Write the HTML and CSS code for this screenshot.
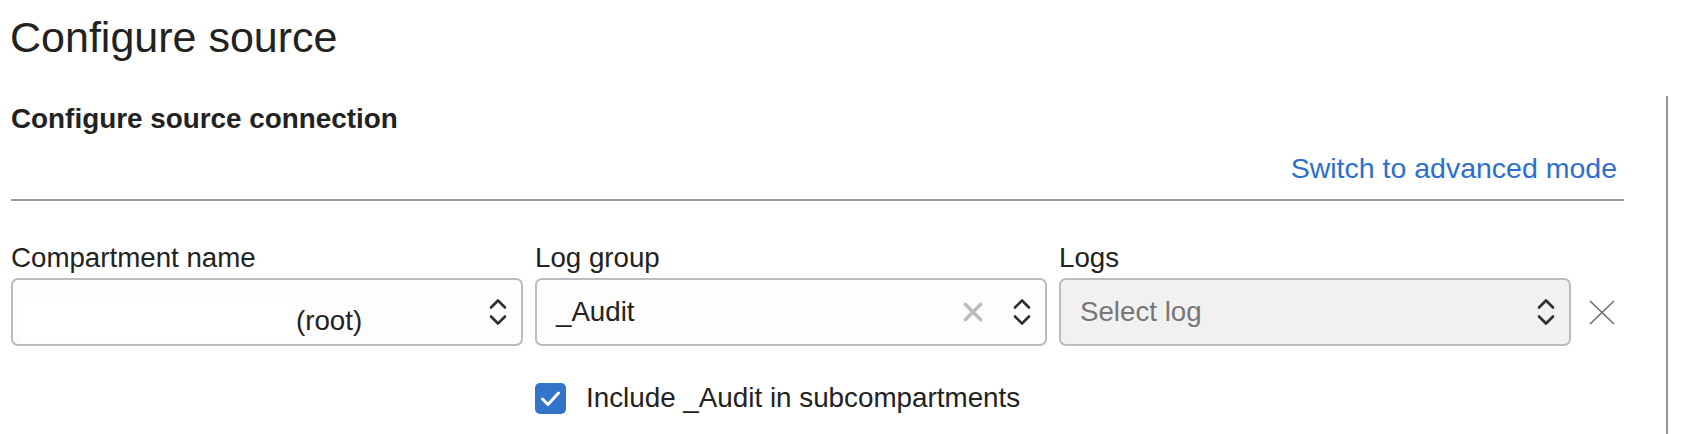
FILE: index.html
```html
<!DOCTYPE html>
<html lang="en">
<head>
<meta charset="utf-8">
<title>Configure source</title>
<link rel="stylesheet" href="styles.css">
</head>
<body>
  <h1 class="page-title">Configure source</h1>
  <div class="panel">
    <h2 class="section-title">Configure source connection</h2>
    <div class="link-row"><a class="mode-link" href="#">Switch to advanced mode</a></div>
    <hr class="divider">
    <div class="fields">
      <label class="field-label">Compartment name</label>
      <label class="field-label">Log group</label>
      <label class="field-label">Logs</label>
      <span></span>

      <div class="select select-compartment">
        <span class="redacted"></span>
        <span class="value value-root">(root)</span>
        <svg class="chev" width="18" height="28" viewBox="0 0 18 28"><path d="M2 9.5 L9 2.5 L16 9.5 M2 18.5 L9 25.5 L16 18.5" fill="none" stroke="#2f2f2f" stroke-width="2.6" stroke-linecap="round" stroke-linejoin="round"/></svg>
      </div>
      <div class="select select-group">
        <span class="value">_Audit</span>
        <svg class="clear" width="20" height="20" viewBox="0 0 20 20"><path d="M2.5 2.5 L17.5 17.5 M17.5 2.5 L2.5 17.5" stroke="#bcbcbc" stroke-width="3.6" stroke-linecap="round"/></svg>
        <svg class="chev" width="18" height="28" viewBox="0 0 18 28"><path d="M2 9.5 L9 2.5 L16 9.5 M2 18.5 L9 25.5 L16 18.5" fill="none" stroke="#2f2f2f" stroke-width="2.6" stroke-linecap="round" stroke-linejoin="round"/></svg>
      </div>
      <div class="select select-logs">
        <span class="value placeholder">Select log</span>
        <svg class="chev" width="18" height="28" viewBox="0 0 18 28"><path d="M2 9.5 L9 2.5 L16 9.5 M2 18.5 L9 25.5 L16 18.5" fill="none" stroke="#2f2f2f" stroke-width="2.6" stroke-linecap="round" stroke-linejoin="round"/></svg>
      </div>
      <div class="remove">
        <svg width="26" height="25" viewBox="0 0 26 25"><path d="M1 1 L25 24 M25 1 L1 24" stroke="#6e6e6e" stroke-width="1.6"/></svg>
      </div>

      <span></span>
      <div class="check-row">
        <span class="checkbox"><svg width="31" height="31" viewBox="0 0 31 31"><path d="M7.5 16 L13 21.5 L23.5 10" fill="none" stroke="#fff" stroke-width="3" stroke-linecap="round" stroke-linejoin="round"/></svg></span>
        <span class="check-label">Include _Audit in subcompartments</span>
      </div>
    </div>
  </div>
</body>
</html>
```

FILE: styles.css
```css
html, body {
  margin: 0;
  padding: 0;
  background: #ffffff;
}

body {
  font-family: "Liberation Sans", Arial, Helvetica, sans-serif;
  color: #222222;
  height: 100vh;
  overflow: hidden;
}

.page-title {
  margin: 13px 0 35px 10px;
  font-size: 43px;
  line-height: 48px;
  font-weight: 400;
  color: #222222;
}

.panel {
  box-sizing: border-box;
  width: 1668px;
  height: calc(100vh - 96px);
  padding: 7px 42px 0 11px;
  border-right: 2px solid #959595;
}

.section-title {
  margin: 0;
  font-size: 27.85px;
  line-height: 32px;
  font-weight: 700;
  color: #222222;
}

.link-row {
  display: flex;
  justify-content: flex-end;
  margin-top: 16px;
  padding-right: 7px;
}

.mode-link {
  font-size: 28.5px;
  line-height: 34px;
  color: #2d6fcc;
  text-decoration: none;
}

.divider {
  margin: 14px 0 0 0;
  border: 0;
  height: 2px;
  background: #9a9a9a;
}

.fields {
  display: grid;
  grid-template-columns: 512px 512px 512px 1fr;
  column-gap: 12px;
  margin-top: 41px;
}

.field-label {
  font-size: 27.7px;
  line-height: 32px;
  color: #222222;
  margin-bottom: 4px;
}

.select {
  box-sizing: border-box;
  height: 68px;
  border: 2px solid #b9bcc0;
  border-radius: 7px;
  background: #fdfdfd;
  display: flex;
  align-items: center;
  padding: 0 14px 0 19px;
}

.value {
  font-size: 27.7px;
  line-height: 32px;
  color: #222222;
  white-space: nowrap;
}

.select-compartment {
  padding-left: 10px;
}

.select-compartment .redacted {
  align-self: flex-end;
  width: 271px;
  height: 44px;
  margin-bottom: 3px;
  background: #ffffff;
}

.select-compartment .value-root {
  align-self: flex-end;
  margin: 0 0 7px 2px;
}

.select-logs {
  background: #f1f1f1;
}

.placeholder {
  color: #767676;
}

.chev {
  margin-left: auto;
  flex: none;
}

.clear {
  margin-left: auto;
  margin-right: 30px;
  flex: none;
}

.clear + .chev {
  margin-left: 0;
}

.remove {
  display: flex;
  align-items: center;
  padding-left: 6px;
}

.check-row {
  display: flex;
  align-items: center;
  gap: 20px;
  margin-top: 36px;
}

.checkbox {
  width: 31px;
  height: 31px;
  border-radius: 5px;
  background: #3174ca;
  display: flex;
  flex: none;
}

.check-label {
  font-size: 27.8px;
  line-height: 32px;
  color: #222222;
}
```
